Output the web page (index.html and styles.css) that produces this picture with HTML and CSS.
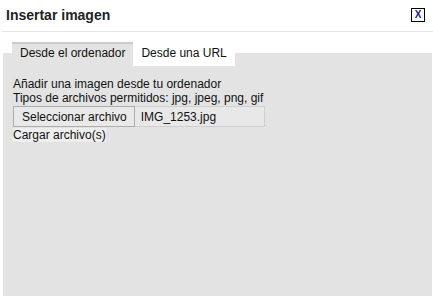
FILE: index.html
```html
<!DOCTYPE html>
<html lang="es">
<head>
    <meta charset="UTF-8">
    <title>Insertar imagen</title>
    <link rel="stylesheet" href="styles.css">
</head>
<body>
    <div class="dialog">
        <div class="dialog-header">
            <h1 class="dialog-title">Insertar imagen</h1>
            <button class="close-btn">X</button>
        </div>
        <div class="tabs">
            <div class="tab tab-active">Desde el ordenador</div>
            <div class="tab">Desde una URL</div>
        </div>
        <div class="tab-panel">
            <p>Añadir una imagen desde tu ordenador</p>
            <p>Tipos de archivos permitidos: jpg, jpeg, png, gif</p>
            <div class="file-row">
                <span class="file-btn">Seleccionar archivo</span>
                <span class="file-name">IMG_1253.jpg</span>
            </div>
            <span class="upload-link">Cargar archivo(s)</span>
        </div>
    </div>
</body>
</html>
```
FILE: styles.css
```css
* {
    margin: 0;
    padding: 0;
    box-sizing: border-box;
}

body {
    background: #ffffff;
    font-family: "Liberation Sans", Arial, sans-serif;
    color: #222222;
    width: 433px;
    height: 298px;
    overflow: hidden;
}

.dialog {
    height: 298px;
    display: flex;
    flex-direction: column;
}

.dialog-header {
    display: flex;
    justify-content: space-between;
    align-items: center;
    height: 32px;
    margin-left: 2px;
    padding: 0 8px 0 4px;
    border-bottom: 1px solid #e5e5e5;
}

.dialog-title {
    font-size: 14px;
    font-weight: bold;
    color: #222222;
    margin-top: -2px;
}

.close-btn {
    width: 14px;
    height: 14px;
    border: 1px solid #000000;
    background: #ffffff;
    font-family: "Liberation Sans", Arial, sans-serif;
    font-size: 10px;
    font-weight: bold;
    color: #1a237e;
    line-height: 12px;
    margin-top: -2px;
}

.tabs {
    display: flex;
    margin-top: 10px;
    padding-left: 12px;
    height: 23px;
    position: relative;
    z-index: 1;
}

.tab {
    font-size: 12px;
    padding: 4px 8px 0 8px;
    color: #111111;
    background: #ffffff;
}

.tab-active {
    background: #e3e3e3;
    border-top: 2px solid #cccccc;
    padding-top: 2px;
}

.tab + .tab {
    height: 24px;
}

.tab-panel {
    flex: 1;
    margin: -12px 1px 2px 3px;
    padding: 24px 10px 0 10px;
    background: #e3e3e3;
    font-size: 12px;
    line-height: 14px;
    color: #111111;
}

.file-row {
    display: flex;
    align-items: stretch;
    width: 252px;
    height: 21px;
    margin-top: 1px;
    border: 1px solid #cfcfcf;
    background: #e8e8e8;
}

.file-btn {
    display: flex;
    align-items: center;
    padding: 0 7px 0 8px;
    border: 1px solid #adadad;
    margin: -1px 0 -1px -1px;
    background: #e9e9e9;
}

.file-name {
    display: flex;
    align-items: center;
    padding-left: 6px;
}

.upload-link {
    display: inline-block;
    margin-top: 1px;
    background: #eeeeee;
}
```
